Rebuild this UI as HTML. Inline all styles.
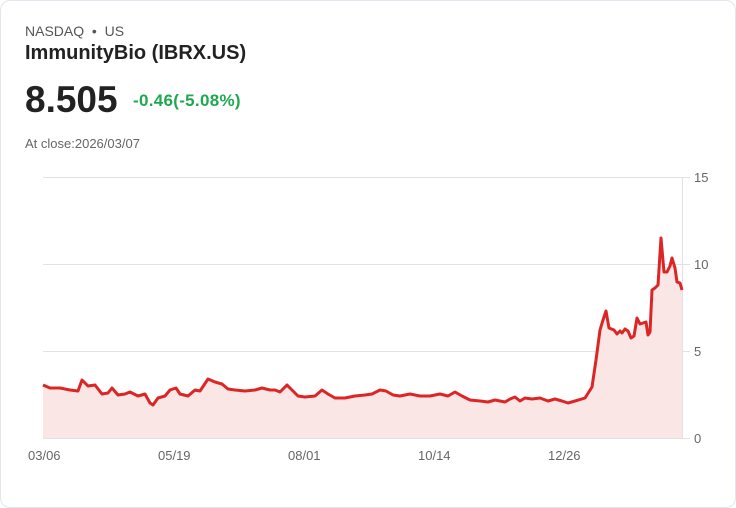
<!DOCTYPE html>
<html><head><style>
body{margin:0;background:#fff;font-family:"Liberation Sans",Arial,sans-serif;}
.card{position:absolute;left:0;top:0;width:734px;height:506px;border:1px solid #e3e6ee;border-radius:10px;background:#fff;}
.t{position:absolute;white-space:nowrap;}
</style></head><body>
<div class="card"></div>
<div class="t" style="left:25px;top:23px;font-size:14px;color:#555;">NASDAQ &nbsp;•&nbsp; US</div>
<div class="t" style="left:25px;top:42px;font-size:20px;font-weight:bold;color:#222;">ImmunityBio (IBRX.US)</div>
<div class="t" style="left:25px;top:79px;font-size:37px;font-weight:bold;color:#222;">8.505</div>
<div class="t" style="left:133px;top:91px;font-size:17px;color:#1fa84f;font-weight:bold;letter-spacing:0.3px;">-0.46(-5.08%)</div>
<div class="t" style="left:25px;top:136px;font-size:13px;color:#666;">At close:2026/03/07</div>
<svg width="736" height="508" style="position:absolute;left:0;top:0" font-family="Liberation Sans,Arial,sans-serif">
<g stroke="#e2e2e2" stroke-width="1">
<line x1="43" y1="177.5" x2="690" y2="177.5"/>
<line x1="43" y1="264.5" x2="690" y2="264.5"/>
<line x1="43" y1="351.5" x2="690" y2="351.5"/>
<line x1="43" y1="438.5" x2="690" y2="438.5"/>
<line x1="682.5" y1="177" x2="682.5" y2="438"/>
</g>
<g fill="#666" font-size="13">
<text x="694" y="182">15</text><text x="694" y="269">10</text><text x="694" y="356">5</text><text x="694" y="443">0</text>
<text x="28" y="460">03/06</text><text x="158" y="460">05/19</text><text x="288" y="460">08/01</text><text x="418" y="460">10/14</text><text x="548" y="460">12/26</text>
</g>
<path fill="#fbe6e6" d="M43,385 L50,388 L60,388 L70,390 L78,391 L82,380 L88,386 L95,385 L102,394 L108,393 L112,388 L118,395 L125,394 L130,392 L138,396 L145,394 L150,403 L153,405 L158,398 L165,396 L170,390 L176,388 L180,394 L188,396 L195,390 L200,391 L208,379 L215,382 L222,384 L228,389 L235,390 L245,391 L255,390 L262,388 L270,390 L275,390 L280,392 L287,385 L292,390 L298,396 L305,397 L315,396 L322,390 L328,394 L335,398 L345,398 L355,396 L365,395 L372,394 L380,390 L386,391 L393,395 L400,396 L410,394 L420,396 L430,396 L440,394 L448,396 L455,392 L462,396 L470,400 L480,401 L488,402 L495,400 L505,402 L510,399 L515,397 L520,401 L525,398 L532,399 L540,398 L548,401 L555,399 L562,401 L568,403 L575,401 L585,398 L592,387 L596,360 L600,330 L603,320 L606,311 L609,328 L614,330 L617,334 L620,331 L622,333 L625,329 L628,331 L631,338 L634,336 L637,318 L640,324 L643,323 L646,322 L648,335 L650,332 L652,290 L655,288 L658,285 L661,238 L664,272 L667,272 L670,266 L672,258 L675,268 L677,282 L680,283 L682,290 L682,438 L43,438 Z"/>
<path fill="none" stroke="#dc2626" stroke-width="3" stroke-linejoin="round" d="M43,385 L50,388 L60,388 L70,390 L78,391 L82,380 L88,386 L95,385 L102,394 L108,393 L112,388 L118,395 L125,394 L130,392 L138,396 L145,394 L150,403 L153,405 L158,398 L165,396 L170,390 L176,388 L180,394 L188,396 L195,390 L200,391 L208,379 L215,382 L222,384 L228,389 L235,390 L245,391 L255,390 L262,388 L270,390 L275,390 L280,392 L287,385 L292,390 L298,396 L305,397 L315,396 L322,390 L328,394 L335,398 L345,398 L355,396 L365,395 L372,394 L380,390 L386,391 L393,395 L400,396 L410,394 L420,396 L430,396 L440,394 L448,396 L455,392 L462,396 L470,400 L480,401 L488,402 L495,400 L505,402 L510,399 L515,397 L520,401 L525,398 L532,399 L540,398 L548,401 L555,399 L562,401 L568,403 L575,401 L585,398 L592,387 L596,360 L600,330 L603,320 L606,311 L609,328 L614,330 L617,334 L620,331 L622,333 L625,329 L628,331 L631,338 L634,336 L637,318 L640,324 L643,323 L646,322 L648,335 L650,332 L652,290 L655,288 L658,285 L661,238 L664,272 L667,272 L670,266 L672,258 L675,268 L677,282 L680,283 L682,290"/>
</svg>
</body></html>
